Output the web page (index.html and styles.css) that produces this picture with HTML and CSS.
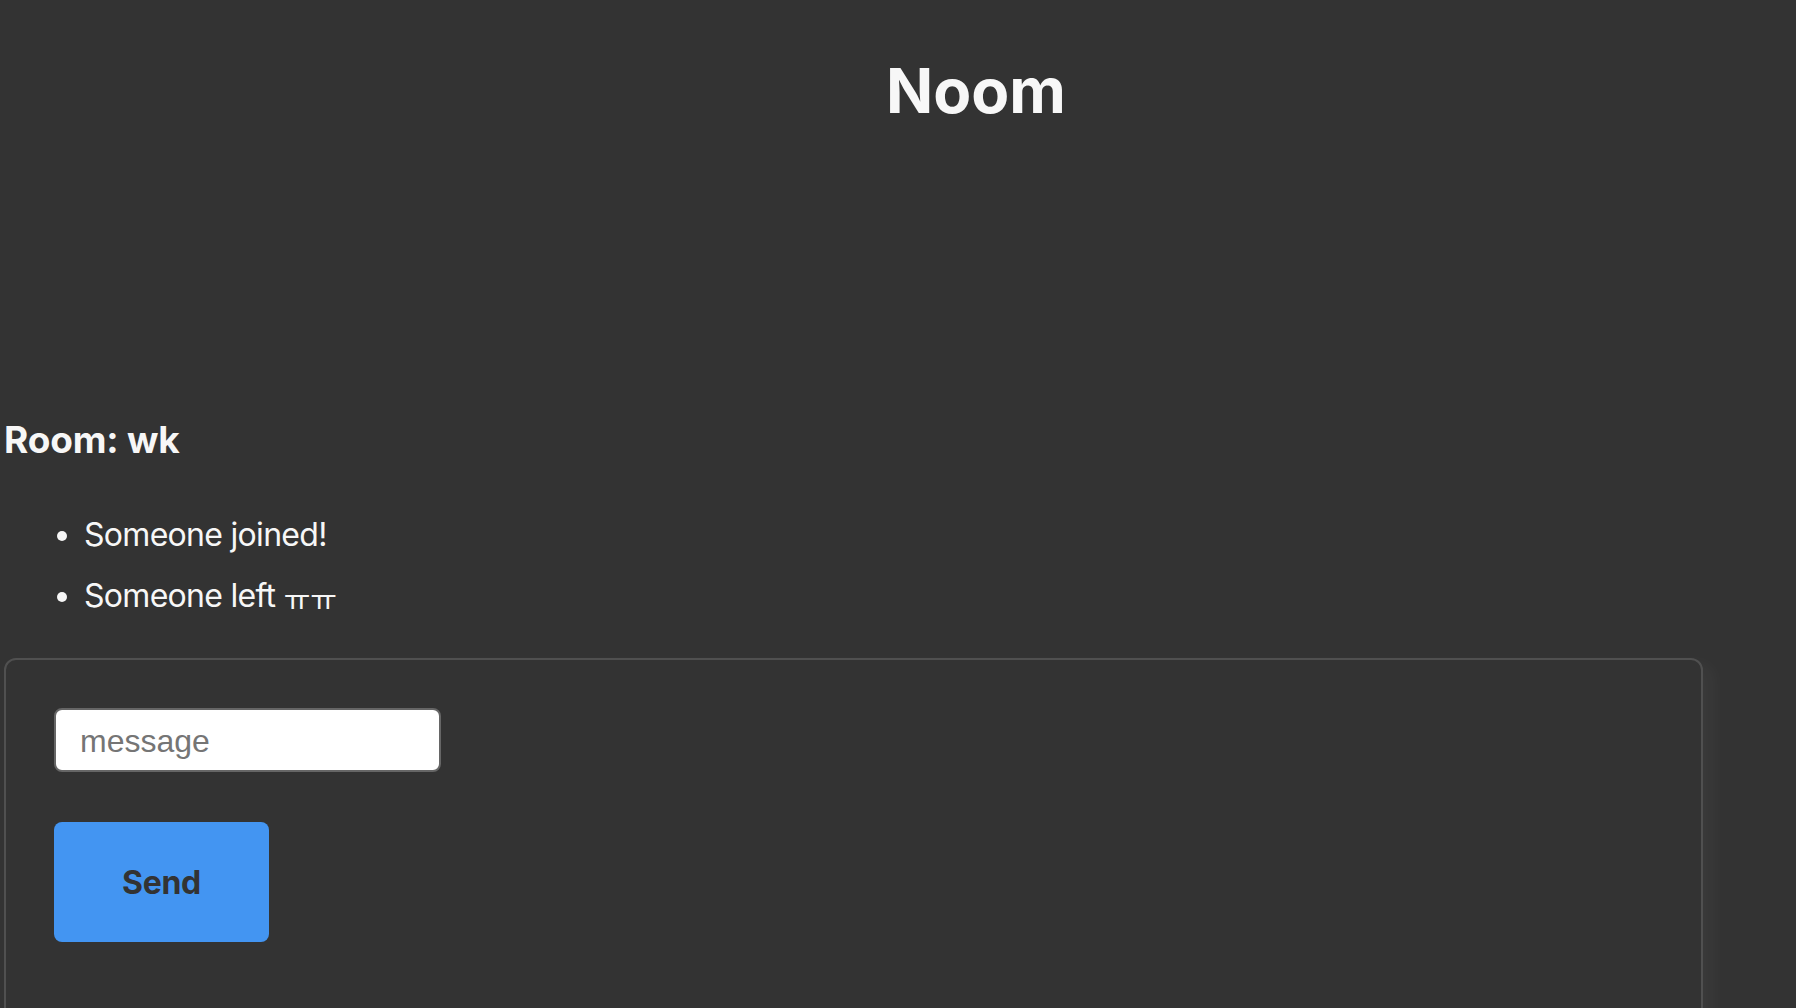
FILE: index.html
```html
<!DOCTYPE html>
<html lang="en">
<head>
<meta charset="utf-8">
<title>Noom</title>
<link rel="stylesheet" href="styles.css">
</head>
<body>
<header class="top">
  <h1 class="brand">Noom</h1>
</header>
<main class="room">
  <h3 class="room-title">Room: wk</h3>
  <ul class="messages">
    <li>Someone joined!</li>
    <li>Someone left <span class="emo">ㅠㅠ</span></li>
  </ul>
  <form class="msg-form">
    <input class="msg-input" type="text" placeholder="message">
    <button class="send-btn" type="button">Send</button>
  </form>
</main>
</body>
</html>
```
FILE: styles.css
```css
html, body {
  margin: 0;
  padding: 0;
  background: #333333;
  color: #f7f7f7;
  font-family: Inter, "Noto Sans CJK KR", sans-serif;
  overflow: hidden;
}
.top {
  padding: 54px 0 0 156px;
  text-align: center;
}
.brand {
  margin: 0;
  font-size: 62px;
  line-height: 74px;
  font-weight: 700;
}
.room {
  padding: 290px 0 0 4px;
}
.room-title {
  margin: 0;
  font-size: 37px;
  line-height: 44px;
  font-weight: 700;
  letter-spacing: -0.2px;
}
.messages {
  margin: 42px 0 0 0;
  padding: 0 0 0 80px;
  font-size: 32px;
  letter-spacing: -0.7px;
}
.messages li {
  line-height: 61px;
}
.emo {
  font-family: "Noto Sans CJK KR", sans-serif;
  font-size: 29px;
  letter-spacing: 0;
  vertical-align: -4px;
  line-height: 1;
}
.msg-form {
  margin-top: 32px;
  width: 1699px;
  box-sizing: border-box;
  height: 420px;
  border: 2px solid #505050;
  border-radius: 12px;
  padding: 48px;
  display: flex;
  flex-direction: column;
  align-items: flex-start;
  gap: 50px;
  box-shadow: 10px 6px 18px rgba(255, 255, 255, 0.04);
}
.msg-input {
  box-sizing: border-box;
  width: 387px;
  height: 64px;
  margin: 0;
  border: 2px solid #666;
  border-radius: 8px;
  padding: 2px 24px 0;
  background: #ffffff;
  font-family: "Liberation Sans", Arial, sans-serif;
  font-size: 32px;
  color: #222;
}
.msg-input::placeholder {
  color: #757575;
}
.send-btn {
  width: 215px;
  height: 120px;
  border: none;
  border-radius: 8px;
  background: #4395f2;
  color: #333333;
  font-family: Inter, sans-serif;
  font-weight: 700;
  font-size: 32px;
  letter-spacing: -0.3px;
  padding: 0;
}
```
